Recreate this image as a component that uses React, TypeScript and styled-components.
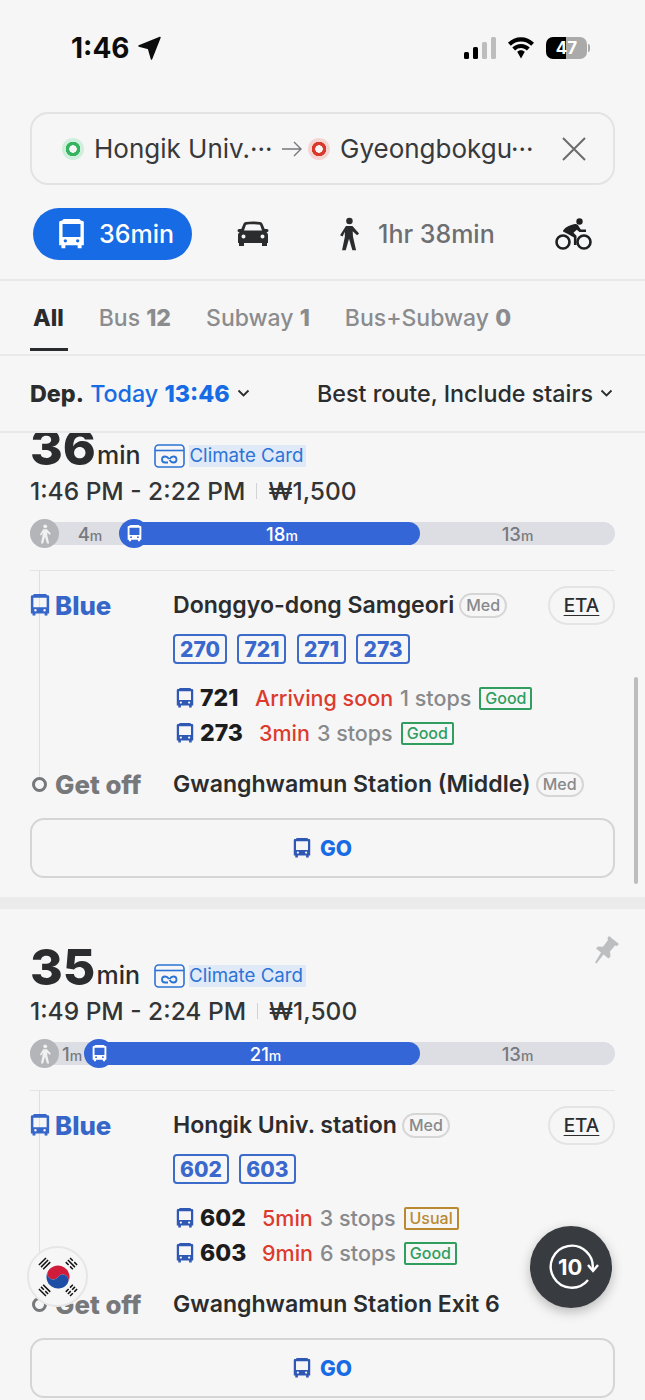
import React from "react";
import styled, { createGlobalStyle } from "styled-components";

const GlobalStyle = createGlobalStyle`
  html, body { margin: 0; padding: 0; background: #f6f6f7; }
  * { box-sizing: border-box; }
  body { font-family: Inter, "Noto Sans", "Liberation Sans", sans-serif; }
`;

const Bus = ({ size = 24, color = "currentColor" }: { size?: number; color?: string }) => (
  <svg width={size} height={size * 1.08} viewBox="0 0 24 26" fill={color}>
    <path
      fillRule="evenodd"
      d="M6 0h12c1.200 0 2 .5 2.400 1.500H21.500A1.500 1.500 0 0 1 23 3v20.500h-2V26h-3.500v-2.500h-11V26H3v-2.500H1V3a1.500 1.500 0 0 1 1.500-1.500h1.100C4 .5 4.800 0 6 0zM4 4.500v11.500h16V4.500zM6.500 18a1.500 1.500 0 1 0 0 3 1.500 1.500 0 0 0 0-3zM17.500 18a1.500 1.500 0 1 0 0 3 1.500 1.500 0 0 0 0-3z"
    />
  </svg>
);

const Walker = ({ size = 24, color = "currentColor" }: { size?: number; color?: string }) => (
  <svg width={size} height={size} viewBox="0 0 24 24" fill={color}>
    <circle cx="12.300" cy="2.800" r="2.300" />
    <path d="M9.800 6.300h4.600l4.700 5.300-1.400 1.300-3.100-2.800.2 3.700 2.200 9.700h-2.600l-2.400-8.200-2.300 8.200H7.100l2-9.700-.1-3.400-1.500 3.300-1.800-.8z" />
  </svg>
);

const Page = styled.div`
  position: relative;
  width: 645px;
  height: 1400px;
  overflow: hidden;
  background: #f6f6f7;
  display: flex;
  flex-direction: column;
  color: #2b2c2e;
`;

const StatusBar = styled.div`
  height: 112px;
  flex: none;
  padding: 31px 58px 0 71px;
  display: flex;
  justify-content: space-between;
  align-items: flex-start;
`;

const Clock = styled.div`
  display: flex;
  align-items: center;
  gap: 8px;
  font-size: 28px;
  font-weight: 700;
  line-height: 34px;
  color: #0c0c0c;
`;

const StatusIcons = styled.div`
  display: flex;
  align-items: center;
  gap: 10px;
  height: 34px;
`;

const Battery = styled.div`
  position: relative;
  width: 41px;
  height: 22px;
  border-radius: 7px;
  background: linear-gradient(90deg, #000 0 48%, #aaaaaa 48% 100%);
  color: #fff;
  font-size: 17px;
  font-weight: 700;
  line-height: 22px;
  text-align: center;
  &::after {
    content: "";
    position: absolute;
    right: -3px;
    top: 7px;
    width: 2px;
    height: 8px;
    border-radius: 0 2px 2px 0;
    background: #aaaaaa;
  }
`;

const SearchBox = styled.div`
  margin: 0 30px;
  height: 73px;
  flex: none;
  border: 2px solid #e3e3e4;
  border-radius: 18px;
  display: flex;
  align-items: center;
  padding: 0 26px 0 30px;
  font-size: 26px;
  color: #38393b;
`;

const Place = styled.span<{ $w: number }>`
  width: ${(p) => p.$w}px;
  margin-left: 10px;
  white-space: nowrap;
  overflow: hidden;
  flex: none;
`;

const PlaceDot = styled.span<{ $ring: string; $halo: string; $left?: number }>`
  width: 22px;
  height: 22px;
  margin-left: ${(p) => p.$left ?? 0}px;
  flex: none;
  border-radius: 50%;
  background: radial-gradient(
    circle,
    #f6f6f7 0 3.500px,
    ${(p) => p.$ring} 4px 7px,
    ${(p) => p.$halo} 7.500px
  );
`;

const ArrowWrap = styled.span`
  margin-left: 9px;
  flex: none;
  display: flex;
`;

const CloseWrap = styled.span`
  margin-left: auto;
  flex: none;
  display: flex;
`;

const Modes = styled.div`
  margin-top: 23px;
  height: 52px;
  flex: none;
  display: flex;
  align-items: center;
  padding: 0 33px;
  font-size: 25px;
  font-weight: 500;
  color: #6d6e70;
`;

const ModeActive = styled.div`
  width: 159px;
  height: 52px;
  border-radius: 26px;
  background: #176be4;
  color: #fff;
  display: flex;
  align-items: center;
  gap: 14px;
  padding-left: 25px;
`;

const ModeItem = styled.div<{ $left: number }>`
  margin-left: ${(p) => p.$left}px;
  display: flex;
  align-items: center;
  gap: 12px;
  color: #6d6e70;
`;

const Tabs = styled.div`
  margin-top: 19px;
  height: 77px;
  flex: none;
  border-top: 2px solid #e9e9ea;
  border-bottom: 2px solid #e9e9ea;
  display: flex;
  gap: 35px;
  padding: 0 33px;
  align-items: center;
  font-size: 23px;
`;

const Tab = styled.div<{ $active?: boolean }>`
  position: relative;
  color: ${(p) => (p.$active ? "#2a2b2d" : "#8b8c8e")};
  font-weight: ${(p) => (p.$active ? 800 : 500)};
  b { font-weight: 800; }
  ${(p) =>
    p.$active &&
    `&::after {
      content: "";
      position: absolute;
      left: -3px;
      right: -4px;
      top: 44px;
      height: 3px;
      background: #2a2b2d;
    }`}
`;

const FilterRow = styled.div`
  height: 77px;
  flex: none;
  border-bottom: 2px solid #e9e9ea;
  display: flex;
  align-items: center;
  justify-content: space-between;
  padding: 0 32px 0 30px;
  font-size: 23.300px;
  font-weight: 500;
  color: #2b2c2e;
`;

const Dep = styled.div`
  display: flex;
  align-items: center;
  gap: 7px;
  b { font-weight: 800; }
  span { color: #176be4; }
`;

const Sort = styled.div`
  display: flex;
  align-items: center;
  gap: 7px;
`;

const Chevron = () => (
  <svg width="13" height="9" viewBox="0 0 13 9" fill="none" stroke="#2b2c2e" strokeWidth="1.800">
    <path d="M1.500 1.500l5 5 5-5" />
  </svg>
);

const List = styled.div`
  flex: 1;
  min-height: 0;
  overflow: hidden;
  display: flex;
  flex-direction: column;
  gap: 12px;
  background: #ebebec;
`;

const CardBox = styled.div<{ $clipped?: boolean }>`
  position: relative;
  flex: none;
  height: 508px;
  margin-top: ${(p) => (p.$clipped ? -44 : 0)}px;
  background: #f6f6f7;
  padding: 36px 30px 0;
`;

const Headline = styled.div`
  height: 45px;
  display: flex;
  align-items: flex-end;
`;

const Big = styled.span`
  font-size: 50px;
  font-weight: 800;
  line-height: 45px;
  color: #2b2c2e;
`;

const Unit = styled.span`
  font-size: 25px;
  font-weight: 500;
  line-height: 29px;
  margin-left: 1px;
`;

const Climate = styled.span`
  margin-left: 14px;
  margin-bottom: 2px;
  display: flex;
  align-items: center;
  gap: 4px;
  font-size: 18.700px;
  line-height: 22px;
  color: #2c73d6;
  span {
    background: #dfe9f7;
    padding: 0 3px 0 0;
  }
`;

const TimeRow = styled.div`
  margin-top: 3px;
  height: 35px;
  display: flex;
  align-items: center;
  font-size: 24.500px;
  font-weight: 500;
  color: #333436;
`;

const Sep = styled.i`
  width: 1px;
  height: 16px;
  margin: 0 11px;
  background: #d2d3d5;
`;

const Track = styled.div`
  margin-top: 14px;
  height: 23px;
  border-radius: 12px;
  background: #dcdee3;
  display: flex;
  align-items: center;
`;

const BarPart = styled.div<{ $w: number; $pad?: number; $active?: boolean }>`
  position: relative;
  width: ${(p) => p.$w}px;
  height: 23px;
  flex: none;
  display: flex;
  align-items: center;
  justify-content: center;
  padding-left: ${(p) => p.$pad ?? 0}px;
  font-size: 18.500px;
  font-weight: 500;
  border-radius: ${(p) => (p.$active ? "0 12px 12px 0" : "0")};
  background: ${(p) => (p.$active ? "#3566d8" : "transparent")};
  color: ${(p) => (p.$active ? "#fff" : "#77797d")};
  small { font-size: 14px; }
`;

const WalkDot = styled.div`
  position: absolute;
  left: 0;
  top: -3px;
  width: 29px;
  height: 29px;
  border-radius: 50%;
  background: #b3b5b9;
  color: #f1f1f2;
  display: flex;
  align-items: center;
  justify-content: center;
`;

const BusDot = styled.div`
  position: absolute;
  left: -15px;
  top: -3px;
  width: 30px;
  height: 29px;
  border-radius: 50%;
  background: #3566d8;
  color: #fff;
  display: flex;
  align-items: center;
  justify-content: center;
`;

const Rule = styled.div`
  margin-top: 25px;
  height: 1px;
  background: #e4e4e5;
`;

const Route = styled.div`
  position: relative;
  display: grid;
  grid-template-columns: 143px 1fr;
  &::before {
    content: "";
    position: absolute;
    left: 9px;
    top: 0;
    bottom: 14px;
    width: 1px;
    background: #dedfe0;
  }
`;

const Label = styled.div<{ $color: string }>`
  position: relative;
  display: flex;
  align-items: center;
  gap: 5px;
  height: 26px;
  font-size: 25.800px;
  font-weight: 800;
  color: ${(p) => p.$color};
`;

const StopName = styled.div`
  display: flex;
  align-items: center;
  gap: 5px;
  height: 26px;
  font-size: 23.100px;
  font-weight: 600;
  color: #2b2c2e;
  white-space: nowrap;
`;

const Crowd = styled.span`
  height: 25px;
  padding: 0 5px;
  border: 2px solid #d6d6d7;
  border-radius: 13px;
  font-size: 16px;
  font-weight: 500;
  line-height: 21px;
  color: #88898b;
`;

const BoardCol = styled.div`
  position: relative;
  padding-top: 21px;
`;

const LabelCol = styled.div`
  padding-top: 21px;
`;

const Eta = styled.div`
  position: absolute;
  right: 0;
  top: 15px;
  width: 67px;
  height: 39px;
  border: 2px solid #e4e4e5;
  border-radius: 20px;
  display: flex;
  align-items: center;
  justify-content: center;
  font-size: 19px;
  font-weight: 500;
  text-decoration: underline;
  text-underline-offset: 3px;
  color: #2b2c2e;
`;

const Chips = styled.div`
  margin-top: 16px;
  display: flex;
  gap: 10.500px;
`;

const Chip = styled.span`
  height: 30px;
  padding: 0 5px;
  border: 2px solid #3d6bc9;
  border-radius: 4px;
  font-size: 21px;
  font-weight: 800;
  line-height: 27px;
  color: #3a68cc;
`;

const Arrivals = styled.div`
  margin-top: 21px;
  padding-left: 3px;
  display: flex;
  flex-direction: column;
  gap: 9px;
`;

const Arrival = styled.div`
  display: flex;
  align-items: center;
  height: 26px;
  font-size: 21.500px;
  white-space: nowrap;
`;

const LineNo = styled.b<{ $w: number }>`
  width: ${(p) => p.$w}px;
  margin-left: 6px;
  font-size: 23px;
  font-weight: 800;
  color: #1c1c1d;
`;

const Wait = styled.span`
  color: #dc3b2d;
  font-weight: 500;
`;

const Stops = styled.span`
  margin-left: 7px;
  font-weight: 500;
  color: #88898b;
`;

const Tag = styled.span<{ $color: string }>`
  margin-left: 8px;
  height: 23px;
  padding: 0 4px;
  border: 2px solid ${(p) => p.$color};
  border-radius: 2px;
  font-size: 16px;
  font-weight: 500;
  line-height: 19px;
  color: ${(p) => p.$color};
`;

const OffRow = styled.div`
  grid-column: 1 / 3;
  margin-top: 25px;
  display: grid;
  grid-template-columns: 143px 1fr;
`;

const OffDot = styled.i`
  width: 15px;
  height: 15px;
  margin: 0 3px 0 2px;
  flex: none;
  border-radius: 50%;
  border: 3px solid #77787a;
  background: #f6f6f7;
`;

const GoButton = styled.div`
  margin-top: 21px;
  height: 60px;
  border: 2px solid #d4d5d6;
  border-radius: 14px;
  display: flex;
  align-items: center;
  justify-content: center;
  gap: 9px;
  font-size: 21px;
  font-weight: 800;
  color: #176be4;
`;

const Pin = styled.div`
  position: absolute;
  right: 25px;
  top: 26px;
  color: #bdbec0;
`;

const Scrollbar = styled.div`
  position: absolute;
  left: 634px;
  top: 677px;
  width: 4px;
  height: 207px;
  border-radius: 2px;
  background: #bcbdbf;
`;

const FlagButton = styled.div`
  position: absolute;
  left: 27px;
  top: 1246px;
  width: 61px;
  height: 61px;
  border-radius: 50%;
  background: #f6f6f7;
  border: 2px solid #e6e6e7;
  display: flex;
  align-items: center;
  justify-content: center;
`;

const Fab = styled.div`
  position: absolute;
  left: 530px;
  top: 1226px;
  width: 82px;
  height: 82px;
  border-radius: 50%;
  background: #383b40;
  box-shadow: 0 4px 12px rgba(0, 0, 0, 0.25);
  display: flex;
  align-items: center;
  justify-content: center;
  color: #fff;
`;

const FabText = styled.span`
  position: absolute;
  left: 28px;
  top: 27px;
  font-size: 22px;
  font-weight: 700;
  line-height: 28px;
`;

const Flag = () => (
  <svg width="48" height="48" viewBox="0 0 48 48">
    <g transform="rotate(33.700 24 24)">
      <path d="M12.500 24a11.500 11.500 0 0 1 23 0 5.750 5.750 0 0 0-11.500 0 5.750 5.750 0 0 1-11.500 0z" fill="#d01c3a" />
      <path d="M12.500 24a11.500 11.500 0 0 0 23 0 5.750 5.750 0 0 0-11.500 0 5.750 5.750 0 0 1-11.500 0z" fill="#1d4ea6" />
    </g>
    <g stroke="#111" strokeWidth="1.500">
      <g transform="rotate(-45 24 24)">
        <path d="M19 2h10M19 5h10M19 8h10" />
        <path d="M19 40h4M25 40h4M19 43h4M25 43h4M19 46h4M25 46h4" />
      </g>
      <g transform="rotate(45 24 24)">
        <path d="M19 2h4M25 2h4M19 5h10M19 8h4M25 8h4" />
        <path d="M19 40h10M19 43h4M25 43h4M19 46h10" />
      </g>
    </g>
  </svg>
);

type Arr = { no: string; noW: number; wait: string; stops: string; tag: string; tagColor: string };
type CardData = {
  mins: string;
  time: string;
  walkW: number;
  walkPad: number;
  walk: string;
  busW: number;
  busPad: number;
  bus: string;
  stop: string;
  crowd: boolean;
  chips: string[];
  arrivals: Arr[];
  off: string;
  offCrowd: boolean;
  pinned?: boolean;
  clipped?: boolean;
};

const GREEN = "#2f9e5f";
const AMBER = "#b98a32";

const cards: CardData[] = [
  {
    mins: "36",
    time: "1:46 PM - 2:22 PM",
    walkW: 104,
    walkPad: 16,
    walk: "4",
    busW: 286,
    busPad: 10,
    bus: "18",
    stop: "Donggyo-dong Samgeori",
    crowd: true,
    chips: ["270", "721", "271", "273"],
    arrivals: [
      { no: "721", noW: 55, wait: "Arriving soon", stops: "1 stops", tag: "Good", tagColor: GREEN },
      { no: "273", noW: 59, wait: "3min", stops: "3 stops", tag: "Good", tagColor: GREEN },
    ],
    off: "Gwanghwamun Station (Middle)",
    offCrowd: true,
    clipped: true,
  },
  {
    mins: "35",
    time: "1:49 PM - 2:24 PM",
    walkW: 69,
    walkPad: 15,
    walk: "1",
    busW: 321,
    busPad: 12,
    bus: "21",
    stop: "Hongik Univ. station",
    crowd: true,
    chips: ["602", "603"],
    arrivals: [
      { no: "602", noW: 62, wait: "5min", stops: "3 stops", tag: "Usual", tagColor: AMBER },
      { no: "603", noW: 62, wait: "9min", stops: "6 stops", tag: "Good", tagColor: GREEN },
    ],
    off: "Gwanghwamun Station Exit 6",
    offCrowd: false,
    pinned: true,
  },
];

const Card = ({ data }: { data: CardData }) => (
  <CardBox $clipped={data.clipped}>
    {data.pinned && (
      <Pin>
        <svg width="26" height="30" viewBox="0 0 26 30" fill="currentColor">
          <path d="M15 1l10 8-2 2-2-.500-5 6 .500 5-2 2-5-4-7 9-1.500-1 6-10-5-4 2-2 5 .300 5-6.800-.500-2z" />
        </svg>
      </Pin>
    )}
    <Headline>
      <Big>{data.mins}</Big>
      <Unit>min</Unit>
      <Climate>
        <svg width="31" height="24" viewBox="0 0 31 24" fill="none" stroke="#2c73d6" strokeWidth="1.600">
          <rect x="1" y="1" width="29" height="22" rx="3.500" />
          <path d="M1 6.500h29" />
          <path d="M15 15c-1-1.600-2.300-2.500-4-2.500a3 3 0 0 0 0 6h3M15.500 15c1-1.600 2.300-2.500 4-2.500a3 3 0 0 1 0 6c-1.700 0-3-.9-4-2.500" strokeWidth="1.800" />
        </svg>
        <span>Climate Card</span>
      </Climate>
    </Headline>
    <TimeRow>
      {data.time}
      <Sep />
      ₩1,500
    </TimeRow>
    <Track>
      <BarPart $w={data.walkW} $pad={data.walkPad}>
        <WalkDot>
          <Walker size={20} />
        </WalkDot>
        <span>
          {data.walk}
          <small>m</small>
        </span>
      </BarPart>
      <BarPart $w={data.busW} $pad={data.busPad} $active>
        <BusDot>
          <Bus size={15} />
        </BusDot>
        <span>
          {data.bus}
          <small>m</small>
        </span>
      </BarPart>
      <BarPart $w={195}>
        <span>
          13<small>m</small>
        </span>
      </BarPart>
    </Track>
    <Rule />
    <Route>
      <LabelCol>
        <Label $color="#3566c8">
          <Bus size={20} />
          Blue
        </Label>
      </LabelCol>
      <BoardCol>
        <StopName>
          {data.stop}
          {data.crowd && <Crowd>Med</Crowd>}
        </StopName>
        <Eta>ETA</Eta>
        <Chips>
          {data.chips.map((c) => (
            <Chip key={c}>{c}</Chip>
          ))}
        </Chips>
        <Arrivals>
          {data.arrivals.map((a) => (
            <Arrival key={a.no}>
              <Bus size={18} color="#2f58b4" />
              <LineNo $w={a.noW}>{a.no}</LineNo>
              <Wait>{a.wait}</Wait>
              <Stops>{a.stops}</Stops>
              <Tag $color={a.tagColor}>{a.tag}</Tag>
            </Arrival>
          ))}
        </Arrivals>
      </BoardCol>
      <OffRow>
        <Label $color="#77787a">
          <OffDot />
          Get off
        </Label>
        <StopName>
          {data.off}
          {data.offCrowd && <Crowd>Med</Crowd>}
        </StopName>
      </OffRow>
    </Route>
    <GoButton>
      <Bus size={18} color="#2f58b4" />
      GO
    </GoButton>
  </CardBox>
);

export default function App() {
  return (
    <Page>
      <GlobalStyle />
      <StatusBar>
        <Clock>
          1:46
          <svg width="23" height="24" viewBox="0 0 23 24" fill="#0c0c0c">
            <path d="M22 1.500L13.500 23l-3-10.500L1 10z" stroke="#0c0c0c" strokeWidth="1.500" strokeLinejoin="round" />
          </svg>
        </Clock>
        <StatusIcons>
          <svg width="32" height="22" viewBox="0 0 32 22">
            <rect x="0" y="15" width="5" height="7" rx="1.500" fill="#000" />
            <rect x="9" y="10" width="5" height="12" rx="1.500" fill="#000" />
            <rect x="18" y="5" width="5" height="17" rx="1.500" fill="#bdbdbe" />
            <rect x="27" y="0" width="5" height="22" rx="1.500" fill="#bdbdbe" />
          </svg>
          <svg width="30" height="22" viewBox="0 0 30 22">
            <path d="M15 4.500c4 0 7.500 1.500 10.200 4.200L28 5.800C24.600 2.300 20 .3 15 .3S5.400 2.300 2 5.800l2.800 2.900C7.500 6 11 4.500 15 4.500z" />
            <path d="M15 11c2.300 0 4.300.9 5.900 2.400l2.800-2.900A12.700 12.700 0 0 0 15 6.900a12.700 12.700 0 0 0-8.700 3.600l2.800 2.900A8.600 8.600 0 0 1 15 11z" />
            <path d="M15 13.300c-1.500 0-2.800.6-3.800 1.500L15 21.500l3.800-6.700c-1-.9-2.300-1.500-3.800-1.500z" />
          </svg>
          <Battery>47</Battery>
        </StatusIcons>
      </StatusBar>

      <SearchBox>
        <PlaceDot $ring="#35b45f" $halo="#cfeedb" />
        <Place $w={178}>Hongik Univ.···</Place>
        <ArrowWrap>
          <svg width="22" height="18" viewBox="0 0 22 18" fill="none" stroke="#77787a" strokeWidth="1.400">
            <path d="M1 9h19M13 2l7 7-7 7" />
          </svg>
        </ArrowWrap>
        <PlaceDot $ring="#d9392b" $halo="#f5d5d1" $left={5} />
        <Place $w={196}>Gyeongbokgu···</Place>
        <CloseWrap>
          <svg width="26" height="26" viewBox="0 0 26 26" stroke="#6b6c6e" strokeWidth="2">
            <path d="M2 2l22 22M24 2L2 24" />
          </svg>
        </CloseWrap>
      </SearchBox>

      <Modes>
        <ModeActive>
          <Bus size={27} />
          36min
        </ModeActive>
        <ModeItem $left={45}>
          <svg width="32" height="26" viewBox="0 0 32 26" fill="#2b2c2e">
            <path
              fillRule="evenodd"
              d="M9 1c4-.7 10-.7 14 0 1.500.3 2.300 1.200 2.800 2.500L27.700 8H30a1.500 1.500 0 0 1 0 3h-.7c1.300 1 1.700 2 1.700 3.500V22h-1v3h-5v-3H7v3H2v-3H1v-7.500C1 13 1.400 12 2.700 11H2a1.500 1.500 0 0 1 0-3h2.300l1.900-4.500C6.700 2.200 7.500 1.300 9 1zM9 3.800L7 9.500h18l-2-5.700c-4-.6-10-.6-14 0zM6.500 13.500a2 2 0 1 0 0 4 2 2 0 0 0 0-4zM25.500 13.500a2 2 0 1 0 0 4 2 2 0 0 0 0-4z"
            />
          </svg>
        </ModeItem>
        <ModeItem $left={63}>
          <Walker size={34} color="#2b2c2e" />
          1hr 38min
        </ModeItem>
        <ModeItem $left={60}>
          <svg width="37" height="33" viewBox="0 0 37 33">
            <circle cx="8" cy="24" r="6.500" fill="none" stroke="#1f2022" strokeWidth="2.600" />
            <circle cx="29" cy="24" r="6.500" fill="none" stroke="#1f2022" strokeWidth="2.600" />
            <circle cx="24.500" cy="3.500" r="3.200" fill="#1f2022" />
            <path fill="#1f2022" d="M8 13.500c.2-3 6-6.500 12-7.500 2-.3 3.200.8 4 2.800l1.800 2.700H31V14h-6.500l-2.700-2.200-3.300 3 3 3V27h-2.600v-7.500l-6-3.500z" />
          </svg>
        </ModeItem>
      </Modes>

      <Tabs>
        <Tab $active>All</Tab>
        <Tab>
          Bus <b>12</b>
        </Tab>
        <Tab>
          Subway <b>1</b>
        </Tab>
        <Tab>
          Bus+Subway <b>0</b>
        </Tab>
      </Tabs>

      <FilterRow>
        <Dep>
          <div>
            <b>Dep.</b> <span>Today</span> <span><b>13:46</b></span>
          </div>
          <Chevron />
        </Dep>
        <Sort>
          Best route, Include stairs
          <Chevron />
        </Sort>
      </FilterRow>

      <List>
        {cards.map((c) => (
          <Card key={c.mins} data={c} />
        ))}
      </List>

      <Scrollbar />
      <FlagButton>
        <Flag />
      </FlagButton>
      <Fab>
        <svg width="60" height="60" viewBox="0 0 60 60" fill="none" stroke="#fff" strokeWidth="2.400">
          <path d="M47 43A21 21 0 1 1 51.500 33" />
          <path d="M47 28l5 6 5-6" />
        </svg>
        <FabText>10</FabText>
      </Fab>
    </Page>
  );
}
